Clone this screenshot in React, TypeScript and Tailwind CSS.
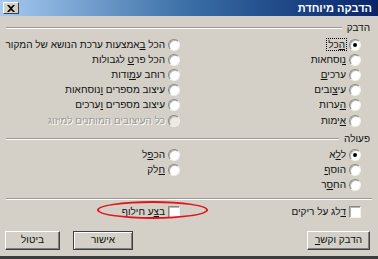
import React from 'react';

const Radio = ({ checked, disabled }: { checked?: boolean; disabled?: boolean }) => (
  <span
    className={`w-[12px] h-[12px] rounded-full shrink-0 flex items-center justify-center border border-[#8a8884] border-r-[#f2f1ee] border-b-[#f2f1ee] shadow-[inset_1px_1px_0_#b8b5ae] ${
      disabled ? 'bg-[#ece9e2]' : 'bg-white'
    }`}
  >
    {checked && <span className="w-[4px] h-[4px] rounded-full bg-black" />}
  </span>
);

const Check = () => (
  <span className="w-[12px] h-[12px] shrink-0 bg-white border border-[#8a8884] border-r-[#f2f1ee] border-b-[#f2f1ee] shadow-[inset_1px_1px_0_#b8b5ae]" />
);

const Row = ({ children, checked, disabled }: { children: React.ReactNode; checked?: boolean; disabled?: boolean }) => (
  <div className="flex items-center gap-[3px] h-[15.2px] whitespace-nowrap">
    <Radio checked={checked} disabled={disabled} />
    <span className={disabled ? 'text-[#9a978f] [text-shadow:1px_1px_0_#fff]' : ''}>{children}</span>
  </div>
);

const Header = ({ label }: { label: string }) => (
  <div className="flex items-center gap-[5px] h-[14px] pr-[8px] pl-[6px]">
    <span>{label}</span>
    <div className="flex-1 h-[2px] border-t border-[#9c9991] border-b border-b-white" />
  </div>
);

const Button = ({ children, wide, isDefault }: { children: React.ReactNode; wide?: string; isDefault?: boolean }) => (
  <button
    className={`${wide} h-[19px] flex items-center justify-center bg-[#d4d0c8] border ${
      isDefault
        ? 'border-[#404040] shadow-[inset_1px_1px_0_#fff,inset_-1px_-1px_0_#808080]'
        : 'border-white border-r-[#404040] border-b-[#404040] shadow-[inset_-1px_-1px_0_#808080]'
    }`}
  >
    {children}
  </button>
);

export default function App() {
  return (
    <div
      dir="rtl"
      className="relative w-[378px] h-[259px] bg-[#d4d0c8] text-[10px] leading-none text-[#111] flex flex-col overflow-hidden border-b-[3px] border-b-[#3c3c3c]"
      style={{ fontFamily: '"Liberation Sans", "DejaVu Sans", sans-serif' }}
    >
      {/* Title bar */}
      <div className="h-[16px] shrink-0 flex items-center justify-between bg-linear-to-l from-[#0a246a] via-[#3a6ea5] to-[#a6caf0] pr-[6px] pl-[3px]">
        <span className="text-white font-bold text-[11px]">הדבקה מיוחדת</span>
        <span className="w-[16px] h-[12px] bg-[#d4d0c8] border border-white border-r-[#404040] border-b-[#404040] flex items-center justify-center">
          <svg width="8" height="7" viewBox="0 0 8 7">
            <path d="M0 0 L2 0 L4 2 L6 0 L8 0 L5 3.5 L8 7 L6 7 L4 5 L2 7 L0 7 L3 3.5 Z" fill="#000" />
          </svg>
        </span>
      </div>

      <div className="mt-[5px]">
        <Header label="הדבק" />
      </div>

      <div className="grid grid-cols-[181px_1fr] pr-[17px] mt-[2px]">
        <div className="flex flex-col">
          <Row checked>
            <span className="outline outline-1 outline-dotted outline-black px-[1px]"><u>ה</u>כל</span>
          </Row>
          <Row><u>נ</u>וסחאות</Row>
          <Row>ערכי<u>ם</u></Row>
          <Row>עי<u>צ</u>ובים</Row>
          <Row><u>ה</u>ערות</Row>
          <Row><u>א</u>ימות</Row>
        </div>
        <div className="flex flex-col">
          <Row>הכל <u>ב</u>אמצעות ערכת הנושא של המקור</Row>
          <Row>הכל פר<u>ט</u> לגבולות</Row>
          <Row>רוחב ע<u>מ</u>ודות</Row>
          <Row>עיצוב מספרים <u>ו</u>נוסחאות</Row>
          <Row>עיצוב מספרים <u>ו</u>ערכים</Row>
          <Row disabled>כל העיצובים המותנים למיזוג</Row>
        </div>
      </div>

      <div className="mt-[4px]">
        <Header label="פעולה" />
      </div>

      <div className="grid grid-cols-[181px_1fr] pr-[17px] mt-[1px]">
        <div className="flex flex-col">
          <Row checked>ל<u>ל</u>א</Row>
          <Row>הוס<u>ף</u></Row>
          <Row>הח<u>ס</u>ר</Row>
        </div>
        <div className="flex flex-col">
          <Row>הכ<u>פ</u>ל</Row>
          <Row><u>ח</u>לק</Row>
        </div>
      </div>

      <div className="mx-[6px] mt-[5px] h-[2px] border-t border-[#9c9991] border-b border-b-white" />

      <div className="grid grid-cols-[181px_1fr] pr-[17px] mt-[4px] h-[16px] items-center">
        <div className="flex items-center gap-[3px]">
          <Check />
          <span><u>ד</u>לג על ריקים</span>
        </div>
        <div className="relative flex items-center gap-[3px]">
          <Check />
          <span>ב<u>צ</u>ע חילוף</span>
          <span className="absolute right-[-28px] top-[-5px] w-[111px] h-[18px] rounded-[50%] border-2 border-[#e0151a]" />
        </div>
      </div>

      <div className="flex items-center mt-[11px] pr-[8px] pl-[5px]">
        <Button wide="w-[63px]">הדבק וקש<u>ר</u></Button>
        <div className="flex-1" />
        <Button wide="w-[60px]" isDefault>אישור</Button>
        <div className="w-[13px]" />
        <Button wide="w-[55px]">ביטול</Button>
      </div>
    </div>
  );
}
